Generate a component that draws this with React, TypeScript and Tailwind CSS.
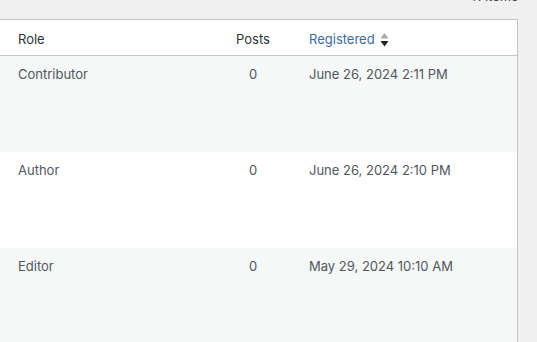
const rows = [
  { role: "Contributor", posts: 0, registered: "June 26, 2024 2:11 PM" },
  { role: "Author", posts: 0, registered: "June 26, 2024 2:10 PM" },
  { role: "Editor", posts: 0, registered: "May 29, 2024 10:10 AM" },
];

function SortArrows() {
  return (
    <svg width="9" height="14" viewBox="0 0 9 14" className="ml-[5px] mt-[1px]">
      <path d="M4.5 0 L8.5 5.5 L0.5 5.5 Z" fill="#a7aaad" />
      <path d="M0.5 8 L8.5 8 L4.5 13.5 Z" fill="#1d2327" />
    </svg>
  );
}

export default function App() {
  return (
    <div
      className="h-[342px] w-[537px] overflow-hidden bg-[#f0f0f1] text-[13px]"
      style={{ fontFamily: "Inter, 'Liberation Sans', sans-serif" }}
    >
      {/* tablenav count, mostly scrolled out of view */}
      <div className="flex h-[19px] justify-end">
        <p className="-mt-[13px] pr-[19px] leading-[19px] text-[#3c434a]">11 items</p>
      </div>

      <div className="-ml-px w-[519px] border-x border-t border-[#c3c4c7] bg-white">
        <div className="grid h-[36px] grid-cols-[226px_54px_1fr] items-center border-b border-[#c3c4c7] pt-[4px] text-[#2c3338]">
          <div className="pl-[18px]">Role</div>
          <div className="text-center">Posts</div>
          <div className="flex items-center pl-[29px] text-[#3a6a9e]">
            Registered
            <SortArrows />
          </div>
        </div>

        {rows.map((r, i) => (
          <div
            key={r.role}
            className={
              "grid h-[96px] grid-cols-[226px_54px_1fr] items-start pt-[9px] leading-[19px] text-[#50575e] " +
              (i % 2 === 0 ? "bg-[#f6f7f7]" : "bg-white")
            }
          >
            <div className="pl-[18px]">{r.role}</div>
            <div className="text-center">{r.posts}</div>
            <div className="pl-[29px]">{r.registered}</div>
          </div>
        ))}
      </div>
    </div>
  );
}
